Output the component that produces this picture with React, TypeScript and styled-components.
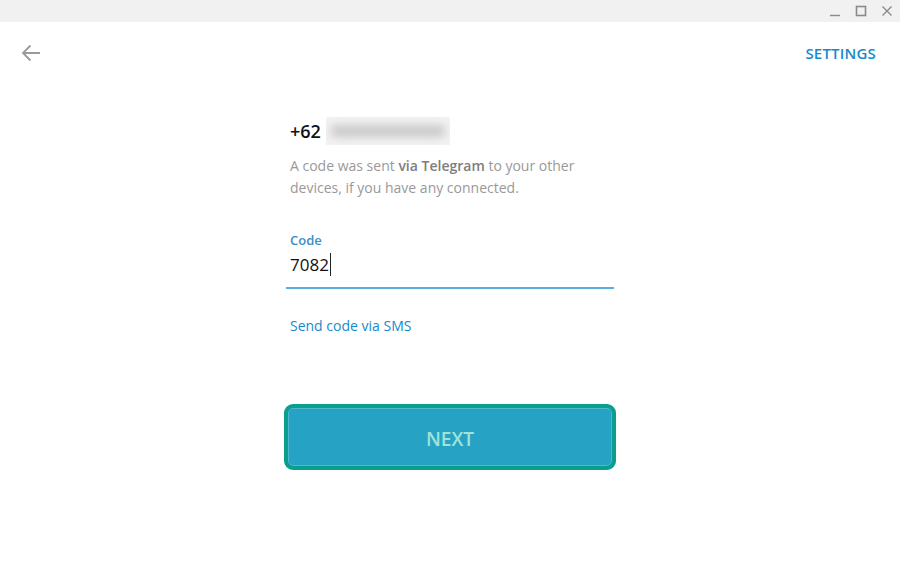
import React, { FC } from "react";
import styled, { createGlobalStyle } from "styled-components";

const GlobalStyle = createGlobalStyle`
  html, body {
    margin: 0;
    padding: 0;
    background: #fff;
    font-family: "Open Sans", "Noto Sans", sans-serif;
  }
  #root {
    width: 900px;
    height: 584px;
  }
`;

const App: FC = () => {
  return (
    <>
      <GlobalStyle />
      <Window>
        <TitleBar>
          <WinButton aria-label="minimize">
            <svg width="12" height="12" viewBox="0 0 12 12">
              <path d="M1 10.5h10" stroke="#8a8a8a" strokeWidth="1.4" />
            </svg>
          </WinButton>
          <WinButton aria-label="maximize">
            <svg width="12" height="12" viewBox="0 0 12 12">
              <rect x="1.5" y="1.5" width="9" height="9" fill="none" stroke="#8a8a8a" strokeWidth="1.6" />
            </svg>
          </WinButton>
          <WinButton aria-label="close">
            <svg width="12" height="12" viewBox="0 0 12 12">
              <path d="M1.5 1.5l9 9M10.5 1.5l-9 9" stroke="#8a8a8a" strokeWidth="1.4" />
            </svg>
          </WinButton>
        </TitleBar>

        <Header>
          <BackButton aria-label="back">
            <svg width="20" height="18" viewBox="0 0 20 18">
              <path d="M19 9H2M9.5 1.5L2 9l7.5 7.5" fill="none" stroke="#9a9a9a" strokeWidth="1.8" />
            </svg>
          </BackButton>
          <HeaderLink>SETTINGS</HeaderLink>
        </Header>

        <Column>
          <Phone>
            +62
            <Hidden>
              <HiddenInk />
            </Hidden>
          </Phone>
          <Description>
            A code was sent <strong>via Telegram</strong> to your other devices, if you have any connected.
          </Description>

          <Field>
            <FieldLabel>Code</FieldLabel>
            <FieldValue>
              7082
              <Caret />
            </FieldValue>
          </Field>

          <Link>Send code via SMS</Link>

          <NextButton>NEXT</NextButton>
        </Column>
      </Window>
    </>
  );
};

const Window = styled.div`
  width: 900px;
  height: 584px;
  display: flex;
  flex-direction: column;
  background: #fff;
`;

const TitleBar = styled.div`
  height: 22px;
  background: #f1f1f1;
  display: flex;
  justify-content: flex-end;
  align-items: center;
  padding-right: 7px;
  gap: 14px;
`;

const WinButton = styled.div`
  width: 12px;
  height: 12px;
  display: flex;

  svg {
    display: block;
  }
`;

const Header = styled.div`
  height: 62px;
  display: flex;
  align-items: center;
  justify-content: space-between;
  padding: 0 24px 0 21px;
`;

const BackButton = styled.div`
  display: flex;
  align-items: center;
`;

const HeaderLink = styled.div`
  font-size: 15px;
  font-weight: 600;
  color: #168acd;
  letter-spacing: 0.2px;
`;

const Column = styled.div`
  width: 328px;
  margin: 0 auto;
  display: flex;
  flex-direction: column;
`;

const Phone = styled.div`
  margin-top: 33px;
  padding-left: 4px;
  height: 28px;
  display: flex;
  align-items: center;
  font-size: 18px;
  font-weight: 600;
  color: #111;
`;

const Hidden = styled.div`
  margin-left: 5px;
  width: 124px;
  height: 28px;
  background: #f3f3f3;
  display: flex;
  align-items: center;
  justify-content: center;
  overflow: hidden;
`;

const HiddenInk = styled.div`
  width: 116px;
  height: 12px;
  background: #c8c8c8;
  border-radius: 6px;
  filter: blur(5px);
`;

const Description = styled.div`
  margin-top: 10px;
  padding: 0 4px;
  width: 300px;
  font-size: 14px;
  line-height: 22px;
  color: #999;

  strong {
    font-weight: 600;
    color: #7d7d7d;
  }
`;

const Field = styled.div`
  margin-top: 32px;
  display: flex;
  flex-direction: column;
  border-bottom: 2px solid #5aade0;
  padding: 0 4px 11px;
`;

const FieldLabel = styled.div`
  font-size: 13px;
  line-height: 18px;
  font-weight: 600;
  color: #3a8fc6;
`;

const FieldValue = styled.div`
  margin-top: 3px;
  height: 24px;
  display: flex;
  align-items: center;
  font-size: 17px;
  color: #111;
`;

const Caret = styled.span`
  width: 1px;
  height: 23px;
  background: #222;
  margin-left: 1px;
`;

const Link = styled.div`
  margin-top: 27px;
  padding-left: 4px;
  font-size: 14px;
  line-height: 20px;
  color: #168acd;
`;

const NextButton = styled.button`
  margin: 68px -2px 0;
  height: 66px;
  padding-top: 5px;
  border: 4px solid #0a9e8c;
  border-radius: 9px;
  background: #25a2c4;
  box-shadow: inset 0 0 0 1px #4fb9cf;
  color: #a0e2d6;
  font-family: "Open Sans", "Noto Sans", sans-serif;
  font-size: 19px;
  font-weight: 600;
  cursor: pointer;
`;

export default App;
